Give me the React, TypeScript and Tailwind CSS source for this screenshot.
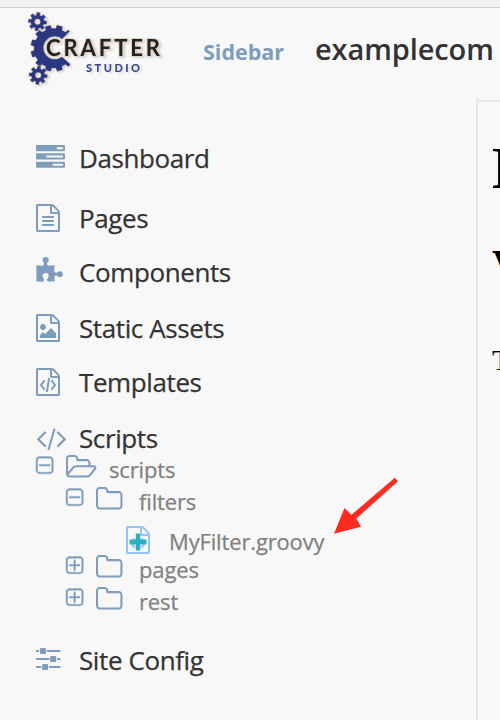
import React from "react";

const FILE =
  "M1596 380q28 28 48 76t20 88v1152q0 40-28 68t-68 28H224q-40 0-68-28t-28-68V96q0-40 28-68t68-28h896q40 0 88 20t76 48zm-444-244v376h376q-10-29-22-41l-313-313q-12-12-41-22zm384 1528V640h-416q-40 0-68-28t-28-68V128H256v1536h1280z";
const SQUARE =
  "M1472 1248V416q0-66-47-113t-113-47H480q-66 0-113 47t-47 113v832q0 66 47 113t113 47h832q66 0 113-47t47-113zm128-832v832q0 119-84.500 203.500T1312 1536H480q-119 0-203.500-84.500T192 1248V416q0-119 84.500-203.500T480 128h832q119 0 203.500 84.500T1600 416z";

const paths = {
  tasks:
    "M1024 1408h640v-128h-640v128zM640 896h1024V768H640v128zM1280 384h384V256h-384v128zM64 1152h1664q26 0 45 19t19 45v256q0 26-19 45t-45 19H64q-26 0-45-19t-19-45v-256q0-26 19-45t45-19zM64 640h1664q26 0 45 19t19 45v256q0 26-19 45t-45 19H64q-26 0-45-19t-19-45V704q0-26 19-45t45-19zM64 128h1664q26 0 45 19t19 45v256q0 26-19 45t-45 19H64q-26 0-45-19t-19-45V192q0-26 19-45t45-19z",
  text:
    FILE +
    "M512 800q0-14 9-23t23-9h704q14 0 23 9t9 23v64q0 14-9 23t-23 9H544q-14 0-23-9t-9-23v-64zm736 224q14 0 23 9t9 23v64q0 14-9 23t-23 9H544q-14 0-23-9t-9-23v-64q0-14 9-23t23-9h704zm0 256q14 0 23 9t9 23v64q0 14-9 23t-23 9H544q-14 0-23-9t-9-23v-64q0-14 9-23t23-9h704z",
  image:
    FILE +
    "M1408 1216v320H384v-192l192-192 128 128 384-384zM576 1024q-80 0-136-56t-56-136 56-136 136-56 136 56 56 136-56 136-136 56z",
  fileCode:
    FILE +
    "M608 768q8-11 21-12.500t24 6.500l51 38q11 8 12.500 21t-6.500 24l-182 243 182 243q8 11 6.500 24t-12.500 21l-51 38q-11 8-24 6.500t-21-12.500l-226-301q-14-19 0-38zm802 301q14 19 0 38l-226 301q-8 11-21 12.500t-24-6.500l-51-38q-11-8-12.500-21t6.500-24l182-243-182-243q-8-11-6.500-24t12.500-21l51-38q11-8 24-6.500t21 12.500zm-620 461q-13-2-20.500-13t-5.500-24l138-831q2-13 13-20.500t24-5.500l63 10q13 2 20.500 13t5.500 24l-138 831q-2 13-13 20.500t-24 5.500z",
  puzzle:
    "M1755 1083q0 81-44.500 135t-123.500 54q-41 0-77.500-17.500t-59-38-56.500-38-71-17.500q-110 0-110 124 0 39 16 115t15 115v5q-22 0-33 1-34 3-97.500 11.500t-115.500 13.500-98 5q-61 0-103-26.500t-42-83.500q0-37 17.500-71t38-56.500 38-59 17.500-77.500q0-79-54-123.500t-135-44.500q-84 0-143 45.500t-59 127.500q0 43 15 83t33.500 64.500 33.500 53 15 50.500q0 45-46 89-37 35-117 35-95 0-245-24-9-2-27.500-4t-27.500-4l-13-2q-1 0-3-1-2 0-2-1V512q2 1 17.500 3.500t34 5 21.500 3.500q150 24 245 24 80 0 117-35 46-44 46-89 0-22-15-50.500t-33.500-53-33.500-64.500-15-83q0-82 59-127.500t144-45.500q80 0 134 44.500t54 123.500q0 41-17.500 77.500t-38 59-38 56.500-17.500 71q0 57 42 83.500t103 26.500q64 0 180-15t163-17v2q-1 2-3.500 17.500t-5 34-3.500 21.500q-24 150-24 245 0 80 35 117 44 46 89 46 22 0 50.500-15t53-33.500 64.500-33.500 83-15q82 0 127.500 59t45.500 143z",
  code:
    "M681 1399l-50 50q-10 10-23 10t-23-10L119 983q-10-10-10-23t10-23l466-466q10-10 23-10t23 10l50 50q10 10 10 23t-10 23L288 960l393 393q10 10 10 23t-10 23zm591-1067L899 1623q-4 13-15.500 19.500T860 1645l-62-17q-13-4-19.500-15.500T776 1588l373-1291q4-13 15.500-19.500t23.500-2.500l62 17q13 4 19.500 15.500t2.500 24.500zm657 651l-466 466q-10 10-23 10t-23-10l-50-50q-10-10-10-23t10-23l393-393-393-393q-10-10-10-23t10-23l50-50q10-10 23-10t23 10l466 466q10 10 10 23t-10 23z",
  sliders:
    "M0 262h200v128H0zM700 262h860v128H700zM0 774h850v128H0zM1350 774h210v128h-210zM0 1286h330v128H0zM830 1286h730v128H830zM320 134h256q64 0 64 64v256q0 64-64 64H320q-64 0-64-64V198q0-64 64-64zM970 646h256q64 0 64 64v256q0 64-64 64H970q-64 0-64-64V710q0-64 64-64zM452 1158h256q64 0 64 64v256q0 64-64 64H452q-64 0-64-64v-256q0-64 64-64z",
  folder:
    "M1600 1312V608q0-40-28-68t-68-28H800q-40 0-68-28t-28-68v-64q0-40-28-68t-68-28H288q-40 0-68 28t-28 68v960q0 40 28 68t68 28h1216q40 0 68-28t28-68zm128-704v704q0 92-66 158t-158 66H288q-92 0-158-66t-66-158V352q0-92 66-158t158-66h320q92 0 158 66t66 158v32h672q92 0 158 66t66 158z",
  folderOpen:
    "M1845 931q0-35-53-35H704q-40 0-85.500 21.500T547 970l-294 363q-18 24-18 40 0 35 53 35h1088q40 0 86-22t71-53l294-363q18-22 18-39zM704 768h768V608q0-40-28-68t-68-28H800q-40 0-68-28t-28-68v-64q0-40-28-68t-68-28H288q-40 0-68 28t-28 68v853l256-315q44-53 116-87.500T704 768zm1269 163q0 62-46 120l-295 363q-43 53-116 87.500t-140 34.500H288q-92 0-158-66T64 1312V352q0-92 66-158t158-66h320q92 0 158 66t66 158v32h544q92 0 158 66t66 158v160h192q54 0 99 24.500t67 70.500q15 32 15 68z",
  minus: SQUARE + "M1344 800v64q0 14-9 23t-23 9H480q-14 0-23-9t-9-23v-64q0-14 9-23t23-9h832q14 0 23 9t9 23z",
  plus:
    SQUARE +
    "M1344 800v64q0 14-9 23t-23 9H960v352q0 14-9 23t-23 9h-64q-14 0-23-9t-9-23V896H480q-14 0-23-9t-9-23v-64q0-14 9-23t23-9h352V416q0-14 9-23t23-9h64q14 0 23 9t9 23v352h352q14 0 23 9t9 23z",
};

type Name = keyof typeof paths;

// Left edge of each glyph's ink inside its 1792-unit em box.
const inset: Partial<Record<Name, number>> = {
  text: 128, image: 128, fileCode: 128, puzzle: 64, code: 48, folder: 64, folderOpen: 64, minus: 192, plus: 192,
};

function Glyph({ name, className }: { name: Name; className: string }) {
  return (
    <svg
      viewBox={`${inset[name] ?? 0} 0 1792 1792`}
      className={`shrink-0 overflow-visible ${className}`}
      fill="currentColor"
      fillRule="evenodd"
    >
      <path d={paths[name]} />
    </svg>
  );
}

function gear(cx: number, cy: number, outer: number, inner: number, teeth: number, turn: number) {
  const pts: string[] = [];
  for (let i = 0; i < teeth; i++) {
    const a = turn + (i * 2 * Math.PI) / teeth;
    const step = (2 * Math.PI) / teeth;
    const put = (r: number, k: number) =>
      pts.push(`${(cx + r * Math.cos(a + k * step)).toFixed(2)} ${(cy + r * Math.sin(a + k * step)).toFixed(2)}`);
    put(inner, -0.3);
    put(outer, -0.22);
    put(outer, 0.22);
    put(inner, 0.3);
  }
  return `M${pts.join("L")}Z`;
}

function hole(cx: number, cy: number, r: number) {
  return `M${cx - r} ${cy}a${r} ${r} 0 1 0 ${2 * r} 0a${r} ${r} 0 1 0 ${-2 * r} 0Z`;
}

function Logo() {
  return (
    <svg viewBox="0 0 180 90" className="h-[90px] w-[180px] shrink-0 overflow-visible drop-shadow-[2px_1px_1px_#d8d5cf]">
      <defs>
        <clipPath id="big">
          <path d="M28 12H70V31L60 41L56 48L60 55L70 64V82H28Z" />
        </clipPath>
      </defs>
      <g fill="#2b3780" fillRule="evenodd" stroke="#c9c3b5" strokeWidth="1.2" paintOrder="stroke">
        <path d={gear(53.800, 48.300, 23.200, 19.800, 12, 0.26) + hole(54.800, 47.800, 11.500)} clipPath="url(#big)" />
        <path d={gear(37.500, 21.700, 9.200, 6.700, 8, 0.1) + hole(37.500, 21.700, 3)} />
        <path d={gear(38.200, 75.300, 9.200, 6.700, 8, 0.1) + hole(38.200, 75.300, 3)} />
      </g>
      <text
        x="46" y="55.500" textLength="114"
        className="font-['Lato'] text-[22px] font-bold"
        fill="#24211f" stroke="#d9d3c4" strokeWidth="2" paintOrder="stroke"
      >
        CRAFTER
      </text>
      <text x="86" y="72.300" textLength="54" className="font-['Lato'] text-[11px] font-black" fill="#3b478c">
        STUDIO
      </text>
    </svg>
  );
}

function Item({ icon, label, cls, iconCls = "size-7" }: { icon: Name; label: string; cls: string; iconCls?: string }) {
  return (
    <div className={`flex h-9 items-center ${cls}`}>
      <div className="flex w-[43px] shrink-0 text-[#7e9dbd]">
        <Glyph name={icon} className={iconCls} />
      </div>
      <span className="text-[26px] leading-9 tracking-[-0.4px] whitespace-nowrap text-[#333] [-webkit-text-stroke:0.25px_#333]">
        {label}
      </span>
    </div>
  );
}

const leafText =
  "text-[22px] leading-[30px] tracking-[-0.15px] whitespace-nowrap text-[#818181] [-webkit-text-stroke:0.25px_#818181]";

function Node({ open, icon, label, cls }: { open: boolean; icon: Name; label: string; cls: string }) {
  return (
    <div className={`flex h-[30px] text-[#7e9dbd] ${cls}`}>
      <div className="w-[30px] shrink-0 pt-px">
        <Glyph name={open ? "minus" : "plus"} className="size-[22px] stroke-current stroke-[30]" />
      </div>
      <div className="-mt-px w-[43px] shrink-0">
        <Glyph name={icon} className="size-[28.500px]" />
      </div>
      <span className={leafText}>{label}</span>
    </div>
  );
}

export default function App() {
  return (
    <div className="relative flex h-[720px] w-[500px] flex-col overflow-hidden bg-[#f8f8f8] font-['Open_Sans','Noto_Sans',sans-serif]">
      <div className="h-2 shrink-0 border-b border-[#cfcfcf] bg-[#f0f0f0]" />
      <header className="flex h-[90px] shrink-0">
        <div className="-mt-2 w-[203px] shrink-0">
          <Logo />
        </div>
        <span className="w-[112px] shrink-0 pt-[29px] text-[21.500px] leading-[30px] font-bold text-[#7e9dbd]">Sidebar</span>
        <span className="pt-[21px] text-[29px] leading-10 font-semibold tracking-[-0.1px] text-[#333]">examplecom</span>
      </header>
      <div className="flex min-h-0 flex-1">
        <nav className="w-[476px] shrink-0 pt-[42px] pl-9">
          <Item icon="tasks" label="Dashboard" cls="" iconCls="size-[29px] -mt-0.5" />
          <Item icon="text" label="Pages" cls="mt-6" />
          <Item icon="puzzle" label="Components" cls="mt-[18px]" iconCls="size-[28.500px] -mt-0.5" />
          <Item icon="image" label="Static Assets" cls="mt-5" />
          <Item icon="fileCode" label="Templates" cls="mt-[18px]" />
          <Item icon="code" label="Scripts" cls="mt-5" iconCls="size-[28.500px]" />
          <Node open icon="folderOpen" label="scripts" cls="-mt-[2px]" />
          <Node open icon="folder" label="filters" cls="mt-0.5 pl-[30px]" />
          <div className="mt-2.5 flex h-[30px] pl-[90px]">
            <div className="relative w-[43px] shrink-0 text-[#93c5fa]">
              <Glyph name="fileCode" className="size-7" />
              <svg viewBox="0 0 24 28" className="absolute top-0 left-0 h-7 w-6" fill="#28b2bd">
                <rect x="3.500" y="13.500" width="17" height="5" rx="1" />
                <rect x="9.800" y="7.500" width="4.500" height="17" rx="1" />
              </svg>
            </div>
            <span className={leafText}>MyFilter.groovy</span>
          </div>
          <Node open={false} icon="folder" label="pages" cls="-mt-[2px] pl-[30px]" />
          <Node open={false} icon="folder" label="rest" cls="mt-0.5 pl-[30px]" />
          <Item icon="sliders" label="Site Config" cls="mt-[26px]" />
        </nav>
        <main className="w-6 shrink-0 border-l-2 border-[#e6e6e6] font-['Liberation_Serif',serif] text-black">
          <div className="mt-[2px] h-full overflow-hidden border-t-2 border-[#e6e6e6] pl-[14px] whitespace-nowrap">
            <h1 className="mt-[31px] text-[60px] leading-[70px] font-bold">H</h1>
            <h2 className="mt-[38px] text-[44px] leading-[50px] font-bold">V</h2>
            <p className="mt-[51px] text-[30px] leading-[36px]">T</p>
          </div>
        </main>
      </div>
      <svg viewBox="0 0 70 60" className="absolute top-[475px] left-[330px] h-[60px] w-[70px]" fill="#fe2b20">
        <path d="M64.800 2.800L68 6.300L26.400 43.500L31 51.700L4 58.800L14.500 33L21.500 39.800Z" />
      </svg>
    </div>
  );
}
